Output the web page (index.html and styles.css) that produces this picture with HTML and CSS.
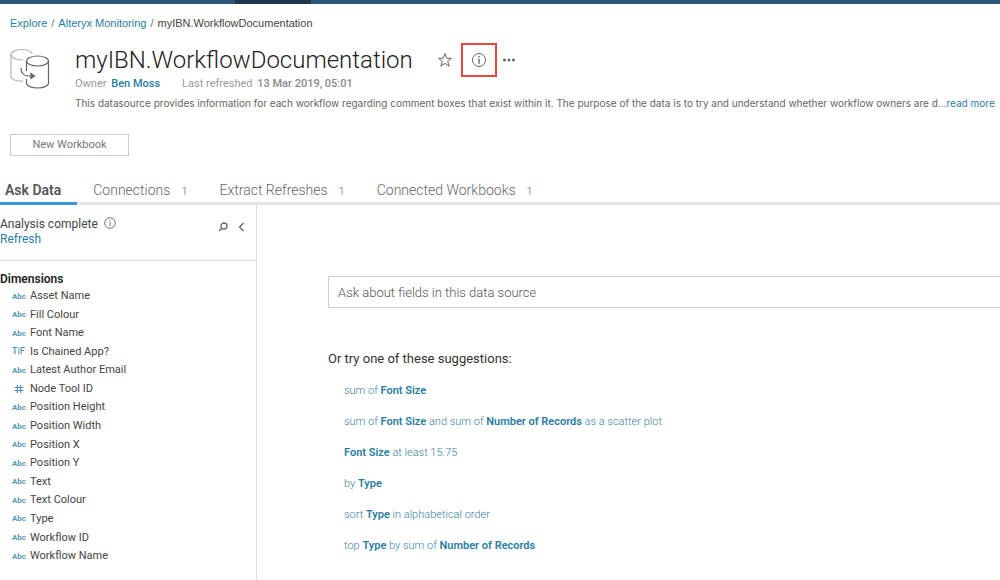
FILE: index.html
```html
<!DOCTYPE html>
<html lang="en">
<head>
<meta charset="utf-8">
<title>myIBN.WorkflowDocumentation</title>
<link rel="stylesheet" href="styles.css">
</head>
<body>
<div class="topbar"><div class="topbar-search"></div></div>
<header class="header">
  <nav class="breadcrumb" aria-label="Breadcrumb">
    <a href="#">Explore</a><span>/</span><a href="#">Alteryx Monitoring</a><span>/</span><span class="current">myIBN.WorkflowDocumentation</span>
  </nav>
  <div class="summary">
    <svg class="source-icon" width="40" height="42" viewBox="0 0 40 42" fill="none" stroke-width="1.200">
      <g stroke="#b4b4b4"><path d="M22.500 6C21 3.500 17 1.500 12 1.500S1 3.500 1 6.500v22c0 3 5 5 12 4.500"/><path d="M1 6.500c0 3 5 5.500 12 5.500"/></g>
      <g stroke="#666"><ellipse cx="27.500" cy="13" rx="11" ry="5"/><path d="M16.500 13v10M16.500 31v4c0 3 5 5 11 5s11-2 11-5V13"/><path d="M11 20c0 5 3 8 8 8h3"/><path d="M21 25.500l3.500 2.500-3.500 2.500z" fill="#666"/></g>
    </svg>
    <div class="details">
      <div class="title-row">
        <h1>myIBN.WorkflowDocumentation</h1>
        <div class="actions">
          <button class="icon-button" aria-label="Favorite"><svg width="16" height="16" viewBox="0 0 16 16" fill="none" stroke="#666" stroke-width="1"><path d="M8 1.500l1.800 4.700 4.700.1-3.800 3 1.500 4.900L8 11.400l-4.200 2.800 1.500-4.900-3.800-3 4.700-.1z"/></svg></button>
          <button class="icon-button highlighted" aria-label="Details"><svg width="16" height="16" viewBox="0 0 16 16" fill="none" stroke="#666"><circle cx="8" cy="8" r="6.500"/><path d="M8 6.800v5M8 4v1.400" stroke-width="1.400"/></svg></button>
          <button class="icon-button" aria-label="More actions"><svg width="14" height="16" viewBox="0 0 14 16" fill="#666"><circle cx="2.500" cy="8" r="1.500"/><circle cx="7" cy="8" r="1.500"/><circle cx="11.500" cy="8" r="1.500"/></svg></button>
        </div>
      </div>
      <div class="meta"><span>Owner <a href="#">Ben Moss</a></span><span>Last refreshed <strong>13 Mar 2019, 05:01</strong></span></div>
      <p class="description">This datasource provides information for each workflow regarding comment boxes that exist within it. The purpose of the data is to try and understand whether workflow owners are d…<a href="#">read more</a></p>
    </div>
  </div>
  <button class="new-workbook">New Workbook</button>
</header>
<nav class="tabs">
  <a class="tab active" href="#">Ask Data</a>
  <a class="tab" href="#">Connections<span>1</span></a>
  <a class="tab" href="#">Extract Refreshes<span>1</span></a>
  <a class="tab" href="#">Connected Workbooks<span>1</span></a>
</nav>
<div class="workspace">
  <aside class="sidebar">
    <div class="analysis">
      <div class="status">
        <div class="status-line">Analysis complete <svg width="12" height="12" viewBox="0 0 12 12" fill="none" stroke="#777"><circle cx="6" cy="6" r="5.300"/><path d="M6 5v4M6 2.800v1.200"/></svg></div>
        <a href="#">Refresh</a>
      </div>
      <div class="tools">
        <button aria-label="Search fields"><svg width="10" height="10" viewBox="0 0 10 10" fill="none" stroke="#666" stroke-width="1.300"><circle cx="6" cy="4" r="3"/><path d="M3.800 6.200L1 9"/></svg></button>
        <button aria-label="Collapse pane"><svg width="7" height="10" viewBox="0 0 7 10" fill="none" stroke="#666" stroke-width="1.300"><path d="M5.500 1L1.500 5l4 4"/></svg></button>
      </div>
    </div>
    <h2>Dimensions</h2>
    <ul class="fields">
      <li><span class="kind">Abc</span>Asset Name</li>
      <li><span class="kind">Abc</span>Fill Colour</li>
      <li><span class="kind">Abc</span>Font Name</li>
      <li><span class="kind flag">T|F</span>Is Chained App?</li>
      <li><span class="kind">Abc</span>Latest Author Email</li>
      <li><span class="kind"><svg width="14" height="10" viewBox="0 0 14 10" stroke="#4f93b0" stroke-width="1.200"><path d="M5.300 1v8M8.700 1v8M2.500 3.500h9M2.500 6.500h9"/></svg></span>Node Tool ID</li>
      <li><span class="kind">Abc</span>Position Height</li>
      <li><span class="kind">Abc</span>Position Width</li>
      <li><span class="kind">Abc</span>Position X</li>
      <li><span class="kind">Abc</span>Position Y</li>
      <li><span class="kind">Abc</span>Text</li>
      <li><span class="kind">Abc</span>Text Colour</li>
      <li><span class="kind">Abc</span>Type</li>
      <li><span class="kind">Abc</span>Workflow ID</li>
      <li><span class="kind">Abc</span>Workflow Name</li>
    </ul>
  </aside>
  <main class="ask">
    <input class="ask-input" type="text" placeholder="Ask about fields in this data source" aria-label="Ask about fields in this data source">
    <h2>Or try one of these suggestions:</h2>
    <ul class="suggestions">
      <li><a href="#">sum of <b>Font Size</b></a></li>
      <li><a href="#">sum of <b>Font Size</b> and sum of <b>Number of Records</b> as a scatter plot</a></li>
      <li><a href="#"><b>Font Size</b> at least 15.75</a></li>
      <li><a href="#">by <b>Type</b></a></li>
      <li><a href="#">sort <b>Type</b> in alphabetical order</a></li>
      <li><a href="#">top <b>Type</b> by sum of <b>Number of Records</b></a></li>
    </ul>
  </main>
</div>
</body>
</html>
```
FILE: styles.css
```css
* { box-sizing: border-box; }
body { margin: 0; background: #fff; color: #444; font: 12px/16px Roboto, sans-serif; overflow-x: hidden; }
a { color: #2a7e9f; text-decoration: none; }
button { padding: 0; border: 0; background: none; color: inherit; font: inherit; display: flex; align-items: center; justify-content: center; }
h1, h2, p, ul { margin: 0; padding: 0; }
ul { list-style: none; }
svg { display: block; flex: none; }

.topbar { height: 4px; background: #2b5878; padding-left: 235px; }
.topbar-search { width: 76px; height: 4px; background: #1d384c; }

.header { padding: 11px 0 0 10px; }
.breadcrumb { display: flex; gap: 4px; font-family: "Liberation Sans", Arial, sans-serif; font-size: 11px; color: #777; }
.breadcrumb .current { color: #444; }
.summary { display: flex; gap: 25px; padding-top: 12px; }
.source-icon { margin-top: 5px; }
.details { flex: 1; min-width: 0; }
.title-row { display: flex; align-items: center; gap: 23px; height: 34px; }
h1 { font-size: 24px; line-height: 34px; font-weight: 300; color: #222; }
.actions { display: flex; align-items: center; }
.icon-button { width: 18px; height: 34px; }
.icon-button.highlighted { width: 36px; border: 2px solid #e8453c; margin: 0 3px 0 7px; }
.meta { display: flex; gap: 22px; line-height: 14px; font-size: 11px; color: #999; }
.meta a, .meta strong { font-weight: 500; margin-left: 2px; }
.meta strong { color: #888; }
.description { padding: 3px 0 2px; line-height: 18px; font-family: Inter, Arial, sans-serif; font-size: 10px; color: #666; white-space: nowrap; }
.new-workbook { width: 119px; height: 22px; margin-top: 20px; border: 1px solid #ccc; color: #777; font-size: 11px; }

.tabs { display: flex; gap: 16px; margin-top: 22px; border-bottom: 3px solid #e6e6e6; font-size: 14px; line-height: 24px; }
.tab { padding: 0 16px 0 0; color: #666; font-weight: 300; display: flex; align-items: baseline; gap: 11px; margin-bottom: -3px; border-bottom: 3px solid transparent; }
.tab span { font-size: 11px; line-height: 16px; }
.tab.active { padding-left: 5px; color: #555; font-weight: 600; border-bottom-color: #3a96dd; }

.workspace { display: flex; }
.sidebar { width: 257px; flex: none; border-right: 1px solid #ddd; min-height: 375px; }
.analysis { display: flex; justify-content: space-between; height: 56px; padding: 12px 11px 0 0; border-bottom: 1px solid #ddd; line-height: 15px; }
.status-line { display: flex; gap: 6px; }
.tools { display: flex; gap: 10px; height: 20px; }
.sidebar h2 { padding-top: 10px; font-size: 12px; line-height: 16px; font-weight: 600; color: #222; }
.fields li { display: flex; align-items: center; font-size: 11px; line-height: 1.69; }
.kind { width: 18px; margin-left: 12px; color: #4f93b0; font-size: 8px; font-weight: 600; }
.kind.flag { font-size: 9px; font-weight: 500; }

.ask { flex: 1; min-width: 0; padding: 71px 0 0 71px; }
.ask-input { display: block; width: 100%; height: 32px; padding: 0 9px; border: 1px solid #ccc; border-right: 0; border-radius: 0; font: 300 13px/16px Roboto, sans-serif; color: #444; }
.ask-input::placeholder { color: #555; opacity: 1; }
.ask h2 { padding-top: 41px; font-size: 13px; line-height: 20px; font-weight: 400; color: #333; }
.suggestions { display: grid; gap: 15px; padding: 14px 0 0 16px; font-size: 11px; }
.suggestions a { color: #3a819f; font-weight: 300; }
.suggestions b { color: #2a7e9f; font-weight: 600; }
```
